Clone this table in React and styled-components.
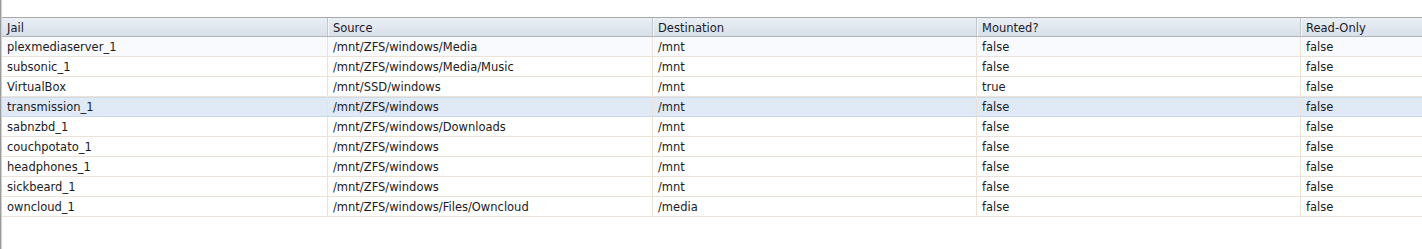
import React from 'react';
import styled, { createGlobalStyle } from 'styled-components';

const GlobalStyle = createGlobalStyle`
  html, body {
    margin: 0;
    padding: 0;
    background: #ffffff;
  }
  body {
    font-family: "DejaVu Sans", Verdana, sans-serif;
    font-size: 11.5px;
  }
`;

const columns = ['Jail', 'Source', 'Destination', 'Mounted?', 'Read-Only'];

const mounts = [
  { jail: 'plexmediaserver_1', source: '/mnt/ZFS/windows/Media', dest: '/mnt', mounted: 'false', readOnly: 'false' },
  { jail: 'subsonic_1', source: '/mnt/ZFS/windows/Media/Music', dest: '/mnt', mounted: 'false', readOnly: 'false' },
  { jail: 'VirtualBox', source: '/mnt/SSD/windows', dest: '/mnt', mounted: 'true', readOnly: 'false' },
  { jail: 'transmission_1', source: '/mnt/ZFS/windows', dest: '/mnt', mounted: 'false', readOnly: 'false' },
  { jail: 'sabnzbd_1', source: '/mnt/ZFS/windows/Downloads', dest: '/mnt', mounted: 'false', readOnly: 'false' },
  { jail: 'couchpotato_1', source: '/mnt/ZFS/windows', dest: '/mnt', mounted: 'false', readOnly: 'false' },
  { jail: 'headphones_1', source: '/mnt/ZFS/windows', dest: '/mnt', mounted: 'false', readOnly: 'false' },
  { jail: 'sickbeard_1', source: '/mnt/ZFS/windows', dest: '/mnt', mounted: 'false', readOnly: 'false' },
  { jail: 'owncloud_1', source: '/mnt/ZFS/windows/Files/Owncloud', dest: '/media', mounted: 'false', readOnly: 'false' },
];

function App() {
  return (
    <>
      <GlobalStyle />
      <Pane>
        <Grid>
          <HeaderRow>
            {columns.map((c) => (
              <HeaderCell key={c}>{c}</HeaderCell>
            ))}
          </HeaderRow>
          {mounts.map((m, i) => (
            <Row key={m.jail} $selected={i === 3} $hover={i === 0}>
              <Cell>{m.jail}</Cell>
              <Cell>{m.source}</Cell>
              <Cell>{m.dest}</Cell>
              <Cell>{m.mounted}</Cell>
              <Cell>{m.readOnly}</Cell>
            </Row>
          ))}
        </Grid>
      </Pane>
    </>
  );
}

const Pane = styled.div`
  height: 249px;
  padding-top: 17px;
  box-sizing: border-box;
  border-left: 1px solid #9c9c9c;
  box-shadow: inset 1px 0 0 #cfcfcf;
`;

const cols = '325px 325px 324px 324px 1fr';

const Grid = styled.div`
  margin-left: 1px;
  display: flex;
  flex-direction: column;
`;

const HeaderRow = styled.div`
  display: grid;
  grid-template-columns: ${cols};
  height: 20px;
  box-sizing: border-box;
  border-top: 1px solid #a9a9a9;
  border-bottom: 1px solid #b4b4b4;
  background: linear-gradient(to bottom, #eaeff5 0%, #dfe6ee 60%, #d8e0ea 100%);
`;

const HeaderCell = styled.div`
  padding: 2px 0 0 5px;
  line-height: 17px;
  color: #1c1a2a;
  white-space: nowrap;
  overflow: hidden;
  border-left: 1px solid #c3c8cf;
  box-shadow: inset 1px 0 0 #f4f6f9;

  &:first-child {
    border-left: none;
    box-shadow: none;
  }
`;

const Row = styled.div`
  display: grid;
  grid-template-columns: ${cols};
  height: 20px;
  box-sizing: border-box;
  border-bottom: 1px solid ${(p) => (p.$selected ? '#c9d9eb' : '#ede2d7')};
  background: ${(p) => (p.$selected ? '#dfeaf6' : p.$hover ? '#f8fafd' : '#ffffff')};
  ${(p) => p.$selected && 'box-shadow: inset 0 1px 0 #cfdcec;'}
`;

const Cell = styled.div`
  padding: 2px 0 0 5px;
  line-height: 17px;
  color: #201a26;
  white-space: nowrap;
  overflow: hidden;
  border-left: 1px solid #ede2d7;

  &:first-child {
    border-left: none;
  }
`;

export default App;
